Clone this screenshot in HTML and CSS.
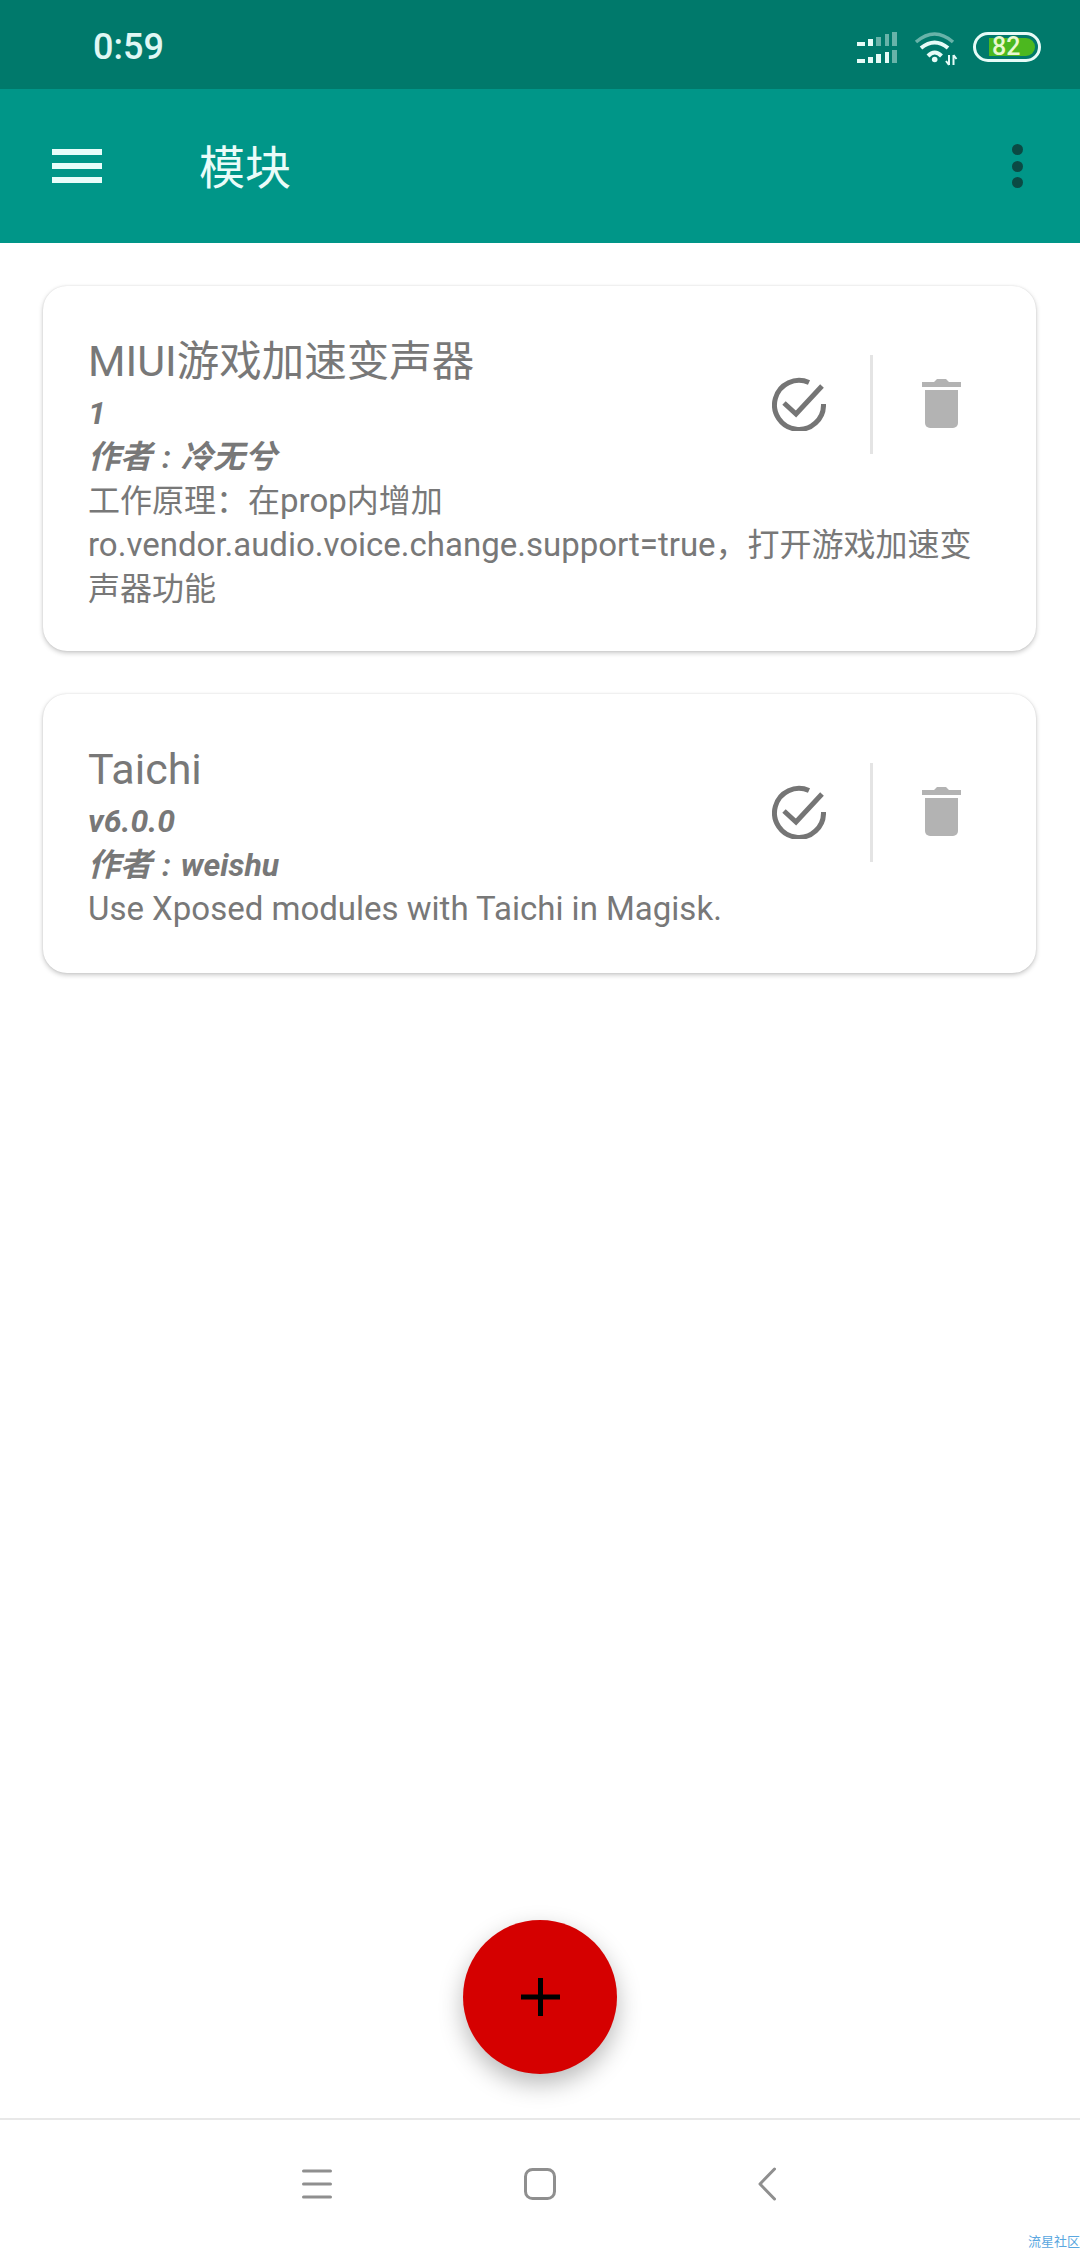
FILE: index.html
```html
<!DOCTYPE html>
<html lang="zh-CN">
<head>
    <meta charset="UTF-8">
    <meta name="viewport" content="width=device-width, initial-scale=1.0">
    <title>模块</title>
    <link rel="stylesheet" href="styles.css">
</head>
<body>
    <div class="page">
        <div class="status-bar">
            <span class="clock">0:59</span>
            <div class="status-icons">
                <svg class="signal" width="40" height="31" viewBox="0 0 40 31">
                    <path fill="#e6fbf7" d="M0 10h8v4H0zM11 7h5v7h-5zM0 27h8v4H0zM11 25h5v6h-5zM19 22h5v9h-5zM28 20h4v11h-4z"/>
                    <path fill="#e6fbf7" opacity="0.45" d="M19 5h5v9h-5zM28 2h4v12h-4zM35 0h5v14h-5zM35 18h5v13h-5z"/>
                </svg>
                <svg class="wifi" width="46" height="36" viewBox="0 0 46 36" fill="none" stroke="#e6fbf7">
                    <path d="M4 12Q22.7-4 41 12" stroke-width="3.5" opacity="0.45"/>
                    <path d="M9 18Q22.7 7 36 18" stroke-width="4"/>
                    <path d="M16 26Q22.7 19 29.5 26" stroke-width="4"/>
                    <circle cx="22.7" cy="29.5" r="2.8" fill="#e6fbf7" stroke="none"/>
                    <path d="M37 25v10M34 31l3 4M41.500 35V25M41.500 25l3 4" stroke-width="2"/>
                </svg>
                <div class="battery">
                    <div class="battery-level">82</div>
                </div>
            </div>
        </div>

        <div class="toolbar">
            <div class="menu-btn"><span></span><span></span><span></span></div>
            <div class="toolbar-title">模块</div>
            <div class="more-btn"><span></span><span></span><span></span></div>
        </div>

        <div class="content">
            <div class="card">
                <div class="actions">
                    <svg class="check" width="54" height="54" viewBox="0 0 54 54" fill="none" stroke="#757575" stroke-width="5">
                        <path d="M37 5.500A24.500 24.500 0 1 0 51.500 27"/>
                        <path d="M12 26l12 11 26-28"/>
                    </svg>
                    <div class="divider"></div>
                    <svg class="trash" width="39" height="49" viewBox="0 0 39 49" fill="#b3b3b3">
                        <path d="M0 3h12l3-3h9l3 3h12v5H0z"/>
                        <path d="M3 11h33v33a5 5 0 0 1-5 5H8a5 5 0 0 1-5-5z"/>
                    </svg>
                </div>
                <div class="module-name">MIUI<span class="cjk">游戏加速变声器</span></div>
                <div class="module-meta">1</div>
                <div class="module-meta">作者 : 冷无兮</div>
                <div class="module-desc"><span class="cjk">工作原理：在</span>prop<span class="cjk">内增加</span> ro.vendor.audio.voice.change.support=true<span class="cjk">，打开游戏加速变声器功能</span></div>
            </div>

            <div class="card">
                <div class="actions">
                    <svg class="check" width="54" height="54" viewBox="0 0 54 54" fill="none" stroke="#757575" stroke-width="5">
                        <path d="M37 5.500A24.500 24.500 0 1 0 51.500 27"/>
                        <path d="M12 26l12 11 26-28"/>
                    </svg>
                    <div class="divider"></div>
                    <svg class="trash" width="39" height="49" viewBox="0 0 39 49" fill="#b3b3b3">
                        <path d="M0 3h12l3-3h9l3 3h12v5H0z"/>
                        <path d="M3 11h33v33a5 5 0 0 1-5 5H8a5 5 0 0 1-5-5z"/>
                    </svg>
                </div>
                <div class="module-name">Taichi</div>
                <div class="module-meta">v6.0.0</div>
                <div class="module-meta">作者 : weishu</div>
                <div class="module-desc">Use Xposed modules with Taichi in Magisk.</div>
            </div>
        </div>

        <div class="fab">
            <svg width="39" height="38" viewBox="0 0 39 38" fill="#000">
                <path d="M17 0h5v16.500h17v5H22V38h-5V21.500H0v-5h17z"/>
            </svg>
        </div>

        <div class="nav-bar">
            <svg width="30" height="30" viewBox="0 0 30 30" stroke="#8f8f8f" stroke-width="3" stroke-linecap="round">
                <path d="M1.500 2h27M1.500 15h27M1.500 28h27"/>
            </svg>
            <svg width="32" height="32" viewBox="0 0 32 32" fill="none" stroke="#8f8f8f" stroke-width="3">
                <rect x="1.500" y="1.500" width="29" height="29" rx="7"/>
            </svg>
            <svg class="nav-back" width="18" height="34" viewBox="0 0 18 34" fill="none" stroke="#8f8f8f" stroke-width="3" stroke-linecap="round" stroke-linejoin="round">
                <path d="M16.500 2L2 17l14.500 15"/>
            </svg>
        </div>

        <div class="watermark">流星社区</div>
    </div>
</body>
</html>
```

FILE: styles.css
```css
html, body { margin: 0; padding: 0; }
body { width: 1080px; height: 2248px; overflow: hidden; background-color: #fff; font-family: Roboto, "Noto Sans CJK SC", sans-serif; }

.page { position: relative; display: flex; flex-direction: column; height: 2248px; overflow: hidden; }

.status-bar { display: flex; justify-content: space-between; align-items: center; height: 89px; padding: 0 39px 0 93px; box-sizing: border-box; background-color: #00796b; }
.clock { margin-top: 5px; font-size: 36px; font-weight: 500; color: #e0f7f4; }
.status-icons { display: flex; align-items: center; gap: 15px; margin-top: 5px; }
.signal { margin-top: 1px; }
.wifi { margin-top: 1px; }

.battery { display: flex; align-items: center; width: 68px; height: 30px; box-sizing: border-box; padding: 3px 3px 3px 13px; border: 3px solid #e6fbf7; border-radius: 15px; }
.battery-level { flex: 1; height: 18px; padding-left: 3px; background-color: #4cb81f; border-radius: 0 9px 9px 0; color: #eaf8d0; font-size: 25px; font-weight: 500; line-height: 18px; }

.toolbar { display: flex; align-items: center; height: 154px; padding: 0 57px 0 52px; box-sizing: border-box; background-color: #009688; }
.menu-btn { display: flex; flex-direction: column; gap: 8px; width: 50px; }
.menu-btn span { display: block; height: 6px; background-color: #e8fdfa; }
.toolbar-title { flex: 1; margin-left: 97px; padding-bottom: 5px; font-size: 46px; color: #eafcf9; }
.more-btn { display: flex; flex-direction: column; gap: 5.500px; }
.more-btn span { display: block; width: 11px; height: 11px; border-radius: 50%; background-color: #0b4a44; }

.content { flex: 1; display: flex; flex-direction: column; gap: 43px; padding: 43px 44px 0 43px; }

.card { display: flow-root; padding: 46px 46px 40px 45px; background-color: #fff; border-radius: 24px; box-shadow: 0 2px 5px rgba(0, 0, 0, 0.22), 0 0 2px rgba(0, 0, 0, 0.1); color: #787878; }
.card:last-child { padding-bottom: 42px; }
.actions { float: right; display: flex; align-items: center; height: 99px; margin: 23px 29px 0 0; }
.divider { width: 3px; height: 99px; margin: 0 49px 0 44px; background-color: #e4e4e4; }
.check { margin-top: -2px; }
.trash { margin-top: -3px; }

.module-name { font-size: 43px; line-height: 59px; }
.module-name .cjk { font-size: 42.500px; }
.module-meta { font-size: 32px; font-weight: 700; font-style: italic; line-height: 44px; word-spacing: 2px; }
.module-desc { font-size: 33px; line-height: 44px; }
.module-desc .cjk { font-size: 32px; }

.fab { position: absolute; left: 463px; top: 1920px; display: flex; align-items: center; justify-content: center; width: 154px; height: 154px; border-radius: 50%; background-color: #d50000; box-shadow: 0 10px 24px rgba(0, 0, 0, 0.28); }

.nav-bar { display: flex; align-items: center; gap: 192px; height: 130px; padding: 0 0 0 302px; box-sizing: border-box; border-top: 2px solid #e8e8e8; }
.nav-back { margin-left: 10px; }

.watermark { position: absolute; right: 0; bottom: 0; font-size: 13px; line-height: 13px; color: #5aa7e0; }
```
